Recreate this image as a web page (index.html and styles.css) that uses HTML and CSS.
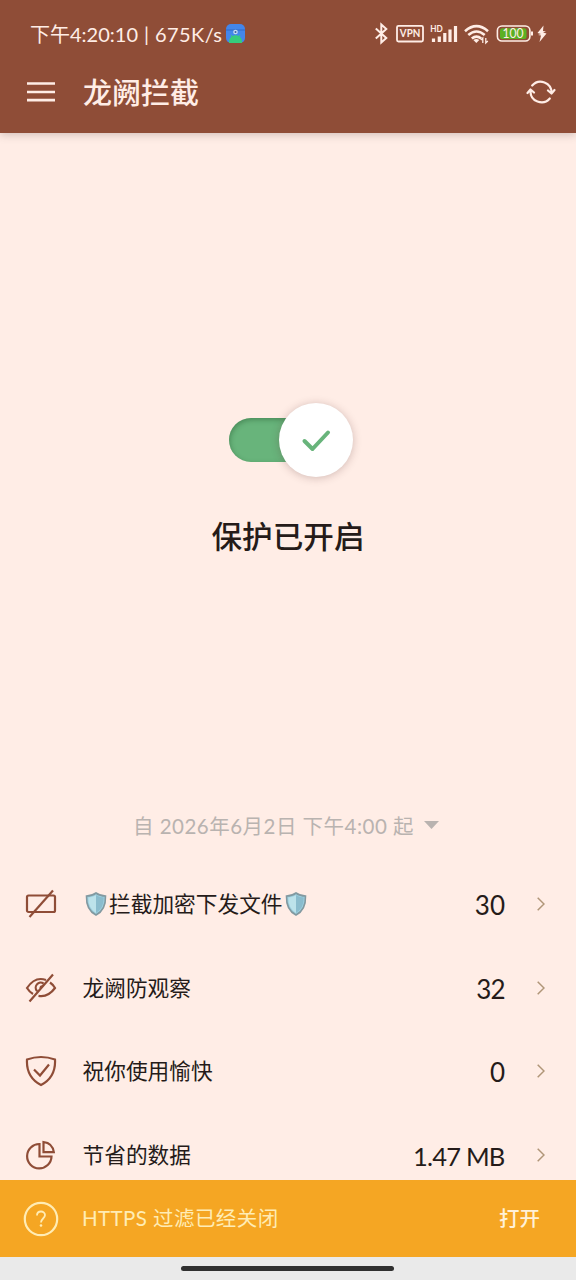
FILE: index.html
```html
<!DOCTYPE html>
<html lang="zh-CN">
<head>
<meta charset="utf-8">
<title>龙阙拦截</title>
<link rel="stylesheet" href="styles.css">
</head>
<body>
<div class="screen">
  <header class="top">
    <div class="status">
      <div class="status-left">
        <span class="clock">下午4:20:10</span><span class="bar">|</span><span class="speed">675K/s</span>
        <svg class="app" width="19" height="19" viewBox="0 0 19 19"><rect width="19" height="19" rx="5" fill="#4386ea"/><path d="M0 6h19" stroke="#3068c5"/><path d="M3 18c0-9 13-9 13 0v1H3z" fill="#35cc7c"/><path d="M5 11l2 3M14 11l-2 3" stroke="#35cc7c"/><circle cx="9.500" cy="8" r="2.300" fill="#c5dcf5"/><circle cx="9.500" cy="8" r="1" fill="#3a5f98"/></svg>
      </div>
      <svg class="status-icons" width="176" height="24" viewBox="374 22 176 24" fill="none" stroke="#ffede6">
        <path d="M375.800 28.500l10.500 9.500-5 4.500v-18l5 4.500-10.500 9.500" stroke-width="2"/>
        <rect x="397" y="25.800" width="26" height="15.700" rx="1.500" stroke-width="1.800"/>
        <text class="vpn" x="399.800" y="37.300" textLength="20.500" lengthAdjust="spacingAndGlyphs">VPN</text>
        <text class="hd" x="430.300" y="31.500" textLength="12.500" lengthAdjust="spacingAndGlyphs">HD</text>
        <g stroke-width="3.200"><path d="M433.500 38.500v3.500M439.300 36.500v5.500M444.800 33v9M450 29.500v12.500M455.500 26v16"/></g>
        <g stroke-width="2.600"><path d="M465 31.200q11.500-10 23 0M468.300 35q8.200-7 16.400 0M471.800 38.500q4.700-3.700 9.400 0"/></g>
        <path d="M473.300 40q3-2 6 0l-3 3z" fill="#ffede6" stroke="none"/>
        <path d="M482.800 43v-5l-2 2M485.800 38v5l2-2" stroke-width="1.300"/>
        <rect x="497.400" y="26" width="32.500" height="15" rx="4.500" stroke-width="1.600"/>
        <rect x="500" y="28.200" width="26.500" height="10.800" rx="2.500" fill="#5cb023" stroke="none"/>
        <text class="level" x="502.500" y="38.200" textLength="21" lengthAdjust="spacingAndGlyphs">100</text>
        <path d="M532 31.500v4" stroke-width="2"/>
        <path d="M543.500 25.500l-6 7.500 3.500 1-3 1 3 .5-1.500 6.500 7-8.500-3.500-1 3-1-3-.5z" fill="#ffede6" stroke="none"/>
      </svg>
    </div>
    <div class="appbar">
      <svg class="menu" width="28" height="20" viewBox="0 0 28 20"><path d="M0 1.500h28M0 10h28M0 18.200h28" stroke="#ffede6" stroke-width="2.700"/></svg>
      <h1 class="title">龙阙拦截</h1>
      <svg class="refresh" width="30" height="26" viewBox="0 0 30 26" fill="none" stroke="#ffede6" stroke-width="2.200" stroke-linecap="round" stroke-linejoin="round"><path d="M6.200 6.500A11 11 0 0 1 25.500 14M22 11.500l3.500 3 3-3.500M23.800 19.500A11 11 0 0 1 4.500 12M1.500 14l3-3.500 3.500 3"/></svg>
    </div>
  </header>
  <main class="content">
    <section class="protection">
      <div class="switch"><div class="knob"><svg width="30" height="24" viewBox="0 0 30 24"><path d="M3.500 13l8 8L27 4.500" fill="none" stroke="#68b47b" stroke-width="4" stroke-linecap="round" stroke-linejoin="round"/></svg></div></div>
      <h2 class="state">保护已开启</h2>
    </section>
    <div class="since"><span class="since-text">自 2026年6月2日 下午4:00 起</span><svg width="15" height="8" viewBox="0 0 15 8"><path d="M0 0h15L7.500 8z" fill="#b9b3b0"/></svg></div>
    <div class="list">
      <div class="row">
        <svg class="icon" width="32" height="32" viewBox="0 0 32 32"><rect x="2" y="7.500" width="28" height="16.500" rx="1.500"/><path d="M28 2.500L4.500 29"/></svg>
        <span class="label"><svg class="emoji" width="22" height="24" viewBox="0 0 22 24"><path d="M11 1q4 3 9.500 3Q21 18 11 23 1 18 1.500 4 7 4 11 1z" fill="#9bd0e0" stroke="#8299a0" stroke-width="1.600"/><path d="M11 3.300q4 2.200 7.700 2.300Q18.700 16.500 11 21z" fill="#8abccd"/><path d="M11 3.300Q7 5.500 3.300 5.600 3.300 16.500 11 21z" fill="#bce2ea"/></svg><span class="ad-text">拦截加密下发文件</span><svg class="emoji" width="22" height="24" viewBox="0 0 22 24"><path d="M11 1q4 3 9.500 3Q21 18 11 23 1 18 1.500 4 7 4 11 1z" fill="#9bd0e0" stroke="#8299a0" stroke-width="1.600"/><path d="M11 3.300q4 2.200 7.700 2.300Q18.700 16.500 11 21z" fill="#8abccd"/><path d="M11 3.300Q7 5.500 3.300 5.600 3.300 16.500 11 21z" fill="#bce2ea"/></svg></span>
        <span class="value">30</span><svg class="chevron" width="8" height="14" viewBox="0 0 8 14"><path d="M.7.7L7 7 .7 13.300"/></svg>
      </div>
      <div class="row">
        <svg class="icon" width="32" height="32" viewBox="0 0 32 32"><path d="M21 8Q10 4 2 16q2.500 4 6 6M13.500 23.800Q23 25.500 30 16q-2-3.500-5-5.500M18.500 11.500a5 5 0 0 0-6.500 7.500M17.500 14.500q-2-.5-2 2M28 2.500L4.500 29.500"/></svg>
        <span class="label">龙阙防观察</span>
        <span class="value narrow">32</span><svg class="chevron" width="8" height="14" viewBox="0 0 8 14"><path d="M.7.7L7 7 .7 13.300"/></svg>
      </div>
      <div class="row">
        <svg class="icon" width="32" height="32" viewBox="0 0 32 32"><path d="M2 4.500q14-5 28 0Q31 22 16 30 1 22 2 4.500zM9 14.500l6 6 9-11"/></svg>
        <span class="label">祝你使用愉快</span>
        <span class="value">0</span><svg class="chevron" width="8" height="14" viewBox="0 0 8 14"><path d="M.7.7L7 7 .7 13.300"/></svg>
      </div>
      <div class="row">
        <svg class="icon" width="32" height="32" viewBox="0 0 32 32"><path d="M14.500 5A12.200 12.200 0 1 0 26.500 17.500H14.500zM18.500 3V13.200h10.300Q27.500 4 18.500 3z"/></svg>
        <span class="label">节省的数据</span>
        <span class="value data">1.47 MB</span><svg class="chevron" width="8" height="14" viewBox="0 0 8 14"><path d="M.7.7L7 7 .7 13.300"/></svg>
      </div>
    </div>
  </main>
  <div class="banner">
    <svg width="36" height="36" viewBox="0 0 36 36" fill="none" stroke="#ffecb4"><circle cx="18" cy="18" r="16.200" stroke-width="2.200"/><path d="M14 14.500c0-5.500 8-5 8-.5 0 3.500-4 3.500-4 7.500" stroke-width="1.800"/><circle cx="18" cy="24.500" r="1.300" fill="#ffecb4" stroke="none"/></svg>
    <span class="notice">HTTPS 过滤已经关闭</span>
    <span class="enable">打开</span>
  </div>
  <footer class="nav"><div class="handle"></div></footer>
</div>
</body>
</html>
```
FILE: styles.css
```css
* { box-sizing: border-box; }
body { margin: 0; background: #ffede6; font-family: Lato, "Noto Sans CJK SC", sans-serif; color: #251b19; }
.screen { width: 576px; height: 1280px; display: flex; flex-direction: column; overflow: hidden; }
.top { height: 133px; flex: none; background: #8f4d37; color: #ffede6; box-shadow: 0 2px 8px rgba(80,60,60,.25); z-index: 1; }
.status { height: 46px; padding: 22px 26px 0 30px; display: flex; justify-content: space-between; }
.status-left { height: 23px; display: flex; align-items: center; font-size: 20px; line-height: 22px; white-space: nowrap; }
.clock { width: 108px; }
.bar { width: 17px; text-align: center; }
.speed { width: 71px; letter-spacing: .4px; }
.status-icons text { fill: #ffede6; stroke: none; font-family: Lato, sans-serif; font-weight: 700; }
.status-icons .vpn { font-size: 10.500px; }
.status-icons .hd { font-size: 9px; }
.status-icons .level { font-size: 13px; font-weight: 400; }
.appbar { height: 92px; padding: 0 20px 0 27px; display: flex; align-items: center; }
.title { margin: 2px 0 0 28px; flex: 1; font-size: 29px; line-height: 40px; font-weight: 500; }
.content { flex: 1; min-height: 0; overflow: hidden; display: flex; flex-direction: column; }
.protection { height: 667px; flex: none; padding-top: 285px; display: flex; flex-direction: column; align-items: center; }
.switch { width: 118px; height: 44px; border-radius: 22px; background: #68b47b; box-shadow: inset 1px 2px 5px rgba(30,80,40,.4); display: flex; align-items: center; justify-content: flex-end; }
.knob { width: 74px; height: 74px; flex: none; margin-right: -6px; border-radius: 50%; background: #fff; display: flex; align-items: center; justify-content: center; box-shadow: 0 1px 8px rgba(90,50,50,.28); }
.state { margin: 53px 0 0; font-size: 30.600px; line-height: 44px; font-weight: 500; }
.since { height: 50px; flex: none; padding-left: 133px; display: flex; align-items: center; gap: 11px; color: #b9b3b0; font-size: 20.500px; white-space: nowrap; }
.since-text { width: 280px; letter-spacing: .48px; }
.list { padding-top: 12px; flex: none; }
.row { height: 83.800px; padding: 0 31px 0 25px; display: flex; align-items: center; }
.icon { flex: none; fill: none; stroke: #8f4d37; stroke-width: 2.200; }
.label { flex: 1; padding-left: 25.500px; display: flex; align-items: center; font-size: 21.700px; line-height: 32px; }
.emoji { margin: 0 2px 0 2.500px; }
.value { font-size: 26px; line-height: 30px; margin: 2px 32px 0 0; }
.narrow { letter-spacing: -.7px; }
.data { font-size: 25.500px; letter-spacing: -.8px; margin-right: 32.500px; }
.chevron { fill: none; stroke: #b09678; stroke-width: 1.500; }
.banner { height: 77px; flex: none; padding: 0 36px 0 23px; display: flex; align-items: center; background: #f5a623; color: #ffecb4; }
.notice { flex: 1; padding: 0 0 3px 23px; font-size: 20.500px; letter-spacing: .42px; }
.enable { padding-bottom: 3px; font-size: 20.500px; font-weight: 500; color: #fff1d8; }
.nav { height: 23px; flex: none; display: flex; justify-content: center; padding: 9px 1px 0 0; background: #eaeaea; }
.handle { width: 213px; height: 5px; border-radius: 3px; background: #303030; }
```
